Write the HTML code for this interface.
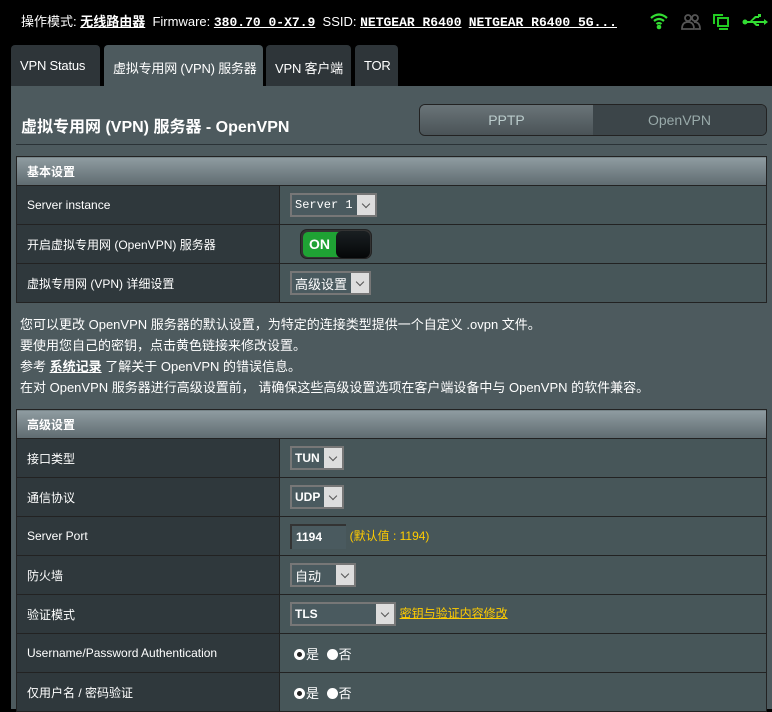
<!DOCTYPE html>
<html><head><meta charset="utf-8"><style>
*{margin:0;padding:0;box-sizing:border-box}
body{width:772px;height:709px;overflow:hidden;background:#000;font-family:"Liberation Sans","Noto Sans CJK SC",sans-serif;font-size:13px;color:#fff;position:relative}
.top{position:absolute;top:11px;left:21px;font-size:13px;color:#fff;white-space:nowrap}
.top b{font-family:"Liberation Mono","Noto Sans CJK SC",monospace;text-decoration:underline;font-weight:bold}
.tab{position:absolute;top:45px;height:41px;background:#2e3539;border-radius:4px 4px 0 0;padding:13px 0 0 9px;font-size:13px;color:#fff;white-space:nowrap;overflow:hidden;letter-spacing:-0.2px}
.tab.act{background:#4d5a5e}
.main{position:absolute;left:11px;top:86px;right:0;bottom:0;background:#4d5a5e}
h1{position:absolute;left:21px;top:113px;font-size:16px;font-weight:bold}
.sw{position:absolute;left:419px;top:104px;width:348px;height:32px;border-radius:6px;border:1px solid #222;display:flex;overflow:hidden}
.sw div{flex:1;text-align:center;line-height:30px;color:#bcc;font-size:14px;background:linear-gradient(#6a7478,#4a5357)}
.sw div+div{background:#3c4549;color:#9aa}
.line{position:absolute;left:16px;top:144px;width:751px;height:1px;background:#2a3236}
table{position:absolute;left:16px;width:751px;border-collapse:collapse}
td{border:1px solid #222;height:39px;vertical-align:middle}
td.l{width:263px;background:#2f383c;padding-left:10px;font-size:12px}
td.v{background:#475659;padding-left:10px}
th{height:29px;text-align:left;padding-left:10px;font-size:12px;background:linear-gradient(#8f9ca1,#5f6b70);border:1px solid #222}
.sel{display:inline-flex;height:24px;border:2px solid #777;background:#4a5a5f;font-size:12px;font-weight:bold;align-items:center;padding-left:3px;vertical-align:middle}
.a{width:18px;height:20px;background:#ddd;margin-left:4px;display:flex;align-items:center;justify-content:center}
.a:after{content:"";width:5px;height:5px;border-right:1px solid #555;border-bottom:1px solid #555;transform:rotate(45deg);margin-top:-3px}
.inp{display:inline-block;width:56px;height:25px;border:2px solid #333;border-right:none;border-bottom:none;background:#4a5a5f;font-size:12px;font-weight:bold;padding:4px 0 0 4px;vertical-align:middle}
.txt{position:absolute;left:20px;top:314px;line-height:21px;font-size:13px}
.radio{display:inline-block;width:11px;height:11px;border-radius:50%;background:#fff;vertical-align:-1px;margin:0 1px 0 4px}
.radio.on{border:3px solid #fff;background:#222}
</style></head><body>
<div class="top">操作模式: <u style="font-weight:bold">无线路由器</u>&nbsp; Firmware: <b>380.70_0-X7.9</b>&nbsp; SSID: <b>NETGEAR_R6400</b>&nbsp; <b>NETGEAR_R6400_5G...</b></div>
<svg style="position:absolute;left:648px;top:10px" width="120" height="22" viewBox="0 0 120 22">
<g fill="none" stroke="#33dd33" stroke-width="2.2"><path d="M3 8q8-7 16 0M6 11q5-4 10 0M8.5 14q2.5-2 5 0"/></g><circle cx="11" cy="17" r="2.3" fill="#33dd33"/>
<g fill="none" stroke="#555" stroke-width="1.8"><circle cx="40" cy="8" r="3"/><circle cx="47" cy="8" r="3"/><path d="M34 19q0-7 6-7q6 0 6 7zM46 12q6 0 6 7h-5"/></g>
<g fill="none" stroke="#22cc22" stroke-width="2"><path d="M66 14V5h9"/><rect x="70" y="8" width="10" height="8"/><path d="M71 19h9"/></g>
<g fill="#33dd33"><path d="M96 11h20v2h-20z"/><circle cx="97" cy="12" r="2.5"/><path d="M116 9l4 3-4 3z"/><path d="M102 11l5-5h4v2h-3l-5 4z"/><path d="M104 12l4 4h3v-2h-2l-3-3z"/><rect x="110" y="4" width="3" height="3"/></g>
</svg>
<div class="tab" style="left:11px;width:89px">VPN Status</div>
<div class="tab act" style="left:104px;width:159px">虚拟专用网 (VPN) 服务器</div>
<div class="tab" style="left:266px;width:85px">VPN 客户端</div>
<div class="tab" style="left:355px;width:43px">TOR</div>
<div class="main"></div>
<h1>虚拟专用网 (VPN) 服务器 - OpenVPN</h1>
<div class="sw"><div>PPTP</div><div>OpenVPN</div></div>
<div class="line"></div>
<table style="top:156px">
<tr><th colspan="2">基本设置</th></tr>
<tr><td class="l">Server instance</td><td class="v"><span class="sel" style="font-family:'Liberation Mono',monospace;font-weight:normal">Server 1<span class="a"></span></span></td></tr>
<tr><td class="l">开启虚拟专用网 (OpenVPN) 服务器</td><td class="v"><span style="display:inline-block;margin-left:10px;width:72px;height:30px;border-radius:7px;background:#333;border:1px solid #222;position:relative;vertical-align:middle"><span style="position:absolute;left:2px;top:2px;width:38px;height:25px;background:#1fa234;border-radius:5px 0 0 5px;font-weight:bold;font-size:14px;line-height:25px;padding-left:6px">ON</span><span style="position:absolute;right:1px;top:1px;width:34px;height:27px;background:linear-gradient(#1a1f22,#050708);border-radius:6px"></span></span></td></tr>
<tr><td class="l">虚拟专用网 (VPN) 详细设置</td><td class="v"><span class="sel" style="font-weight:normal;font-size:13px">高级设置<span class="a"></span></span></td></tr>
</table>
<div class="txt">您可以更改 OpenVPN 服务器的默认设置，为特定的连接类型提供一个自定义 .ovpn 文件。<br>要使用您自己的密钥，点击黄色链接来修改设置。<br>参考 <u style="font-weight:bold">系统记录</u> 了解关于 OpenVPN 的错误信息。<br>在对 OpenVPN 服务器进行高级设置前， 请确保这些高级设置选项在客户端设备中与 OpenVPN 的软件兼容。</div>
<table style="top:409px">
<tr><th colspan="2">高级设置</th></tr>
<tr><td class="l">接口类型</td><td class="v"><span class="sel">TUN<span class="a"></span></span></td></tr>
<tr><td class="l">通信协议</td><td class="v"><span class="sel">UDP<span class="a"></span></span></td></tr>
<tr><td class="l">Server Port</td><td class="v"><span class="inp">1194</span> <span style="color:#fc0;font-size:12px">(默认值 : 1194)</span></td></tr>
<tr><td class="l">防火墙</td><td class="v"><span class="sel" style="font-weight:normal;font-size:13px;width:66px;justify-content:space-between">自动<span class="a"></span></span></td></tr>
<tr><td class="l">验证模式</td><td class="v"><span class="sel" style="width:106px;justify-content:space-between">TLS<span class="a"></span></span> <u style="color:#fc0;font-size:12px">密钥与验证内容修改</u></td></tr>
<tr><td class="l">Username/Password Authentication</td><td class="v"><span class="radio on"></span>是 <span class="radio"></span>否</td></tr>
<tr><td class="l">仅用户名 / 密码验证</td><td class="v"><span class="radio on"></span>是 <span class="radio"></span>否</td></tr>
</table>
</body></html>
